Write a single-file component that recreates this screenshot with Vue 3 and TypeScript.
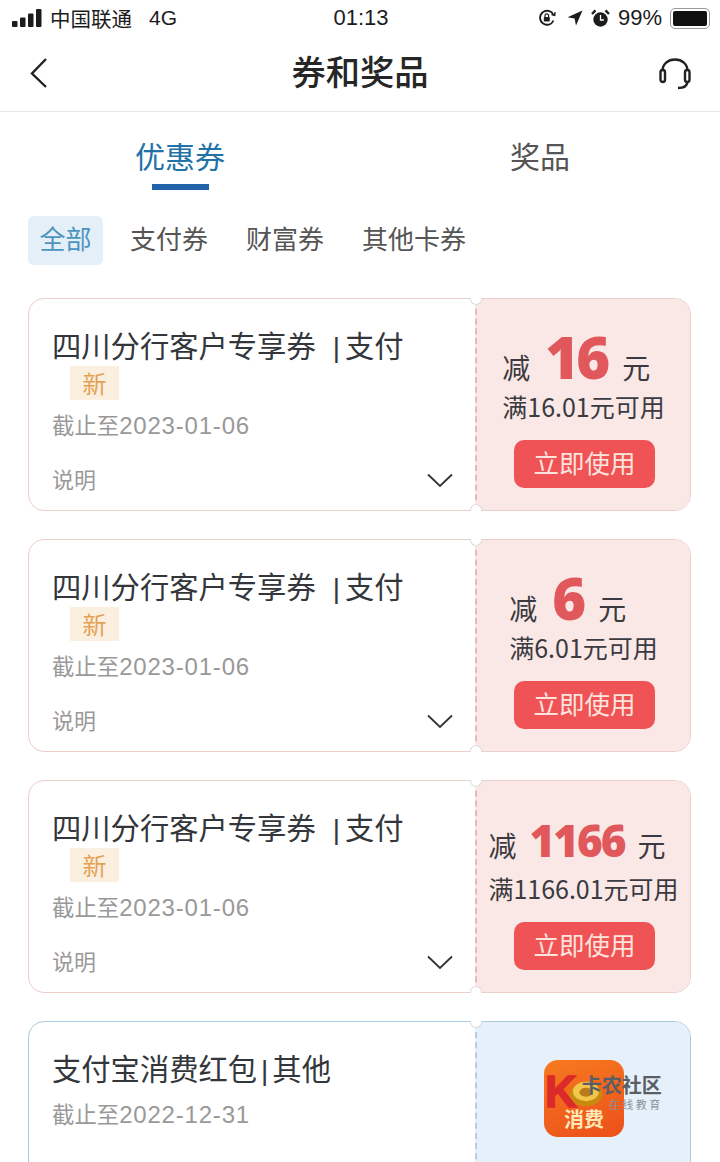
<script setup lang="ts">
interface Coupon {
  amount: string
  min: string
}

const filters = ['全部', '支付券', '财富券', '其他卡券']

const coupons: Coupon[] = [
  { amount: '16', min: '满16.01元可用' },
  { amount: '6', min: '满6.01元可用' },
  { amount: '1166', min: '满1166.01元可用' },
]
</script>

<template>
  <div class="page">
    <header class="status">
      <div class="status-left">
        <svg class="signal" width="31" height="18" viewBox="0 0 31 18">
          <rect x="0" y="12" width="5.5" height="6" rx="1" />
          <rect x="8" y="8.5" width="5.5" height="9.5" rx="1" />
          <rect x="16" y="4.5" width="5.5" height="13.5" rx="1" />
          <rect x="24" y="0" width="5.5" height="18" rx="1" />
        </svg>
        <span class="carrier">中国联通</span>
        <span class="net">4G</span>
      </div>
      <span class="clock">01:13</span>
      <div class="status-right">
        <svg width="18" height="18" viewBox="0 0 18 18" fill="none" stroke="#1c1c1c" stroke-width="1.8">
          <path d="M15.5 11.5A7 7 0 1 1 15.5 6" />
          <path d="M13.5 5.5l3.2.8.4-3.2" stroke-width="1.4" />
          <rect x="5.8" y="8" width="6" height="4.6" rx=".8" fill="#1c1c1c" stroke="none" />
          <path d="M7 8V6.6a1.8 1.8 0 0 1 3.6 0V8" stroke-width="1.2" />
        </svg>
        <svg class="arrow" width="16" height="16" viewBox="0 0 16 16">
          <path d="M15.5.5L9 15.5 7.6 8.6 .6 7.2z" fill="#1c1c1c" />
        </svg>
        <svg width="19" height="19" viewBox="0 0 19 19">
          <circle cx="9.5" cy="10.5" r="7.2" fill="#1c1c1c" />
          <path d="M9.5 6v5h3.4" fill="none" stroke="#fff" stroke-width="1.3" />
          <path d="M1 5l3.5-3.6M18 5l-3.5-3.6" stroke="#1c1c1c" stroke-width="2.4" />
        </svg>
        <span class="pct">99%</span>
        <div class="battery"><div class="battery-fill" /></div>
      </div>
    </header>

    <nav class="navbar">
      <svg class="back" width="20" height="32" viewBox="0 0 20 32" fill="none" stroke="#222" stroke-width="2.4">
        <path d="M17 2L3 16.5 17 30" />
      </svg>
      <h1 class="nav-title">券和奖品</h1>
      <svg class="support" width="34" height="32" viewBox="0 0 34 32" fill="none" stroke="#222" stroke-width="2.4">
        <path d="M4.500 13C4.500 6 10 1.500 17 1.500S29.500 6 29.500 13" />
        <rect x="2.500" y="12" width="4.500" height="12" rx="2.250" />
        <rect x="27" y="12" width="4.500" height="12" rx="2.250" />
        <path d="M29.500 24c-.5 4-4 6-9.500 6" />
      </svg>
    </nav>

    <section class="tabs">
      <div class="tab active">
        <span>优惠券</span>
        <i class="tab-line" />
      </div>
      <div class="tab"><span>奖品</span></div>
    </section>

    <section class="filters">
      <span v-for="(f, i) in filters" :key="f" class="filter" :class="{ on: i === 0 }">{{ f }}</span>
    </section>

    <main class="list">
      <article v-for="c in coupons" :key="c.amount" class="ticket red">
        <div class="ticket-left">
          <div class="title">四川分行客户专享券<span class="sep">|</span>支付</div>
          <span class="badge">新</span>
          <div class="date">截止至<span class="num">2023-01-06</span></div>
          <div class="desc">
            <span>说明</span>
            <svg width="26" height="15" viewBox="0 0 26 15" fill="none" stroke="#333" stroke-width="1.8">
              <path d="M1 1.500L13 13 25 1.500" />
            </svg>
          </div>
        </div>
        <div class="ticket-right">
          <div class="offer">
            <div class="amount-row" :class="{ long: c.amount.length > 2 }">
              <span class="unit">减</span>
              <strong class="amount">{{ c.amount }}</strong>
              <span class="unit">元</span>
            </div>
            <div class="min">{{ c.min }}</div>
          </div>
          <button class="use">立即使用</button>
        </div>
        <i class="notch top" />
        <i class="notch bottom" />
      </article>

      <article class="ticket blue">
        <div class="ticket-left">
          <div class="title">支付宝消费红包<span class="sep small">|</span>其他</div>
          <div class="date second">截止至<span class="num">2022-12-31</span></div>
        </div>
        <div class="ticket-right center">
          <div class="app-icon">
            <svg width="36" height="30" viewBox="0 0 44 36">
              <ellipse cx="22" cy="20" rx="20" ry="14" fill="#c98a10" />
              <ellipse cx="22" cy="16" rx="16" ry="12" fill="#f2c64a" />
              <ellipse cx="22" cy="17" rx="8" ry="5.500" fill="#b97b16" />
            </svg>
            <span>消费</span>
          </div>
        </div>
        <i class="notch top" />
        <div class="mark">
          <span class="mark-k">K</span>
          <div class="mark-text">
            <span class="mark-name">卡农社区</span>
            <span class="mark-sub">在线教育</span>
          </div>
        </div>
      </article>
    </main>
  </div>
</template>

<style>
html, body { margin: 0; background: #fff; overflow: hidden; }
</style>

<style scoped>
.page {
  width: 720px;
  height: 1162px;
  overflow: hidden;
  background: #fff;
  font-family: "Noto Sans CJK SC", "Liberation Sans", sans-serif;
  color: #333;
}

.status {
  height: 36px;
  padding: 0 10px 0 12px;
  display: grid;
  grid-template-columns: 1fr auto 1fr;
  align-items: center;
  color: #1c1c1c;
}
.status-left { display: flex; align-items: center; }
.signal { fill: #1c1c1c; margin-right: 7px; }
.carrier { font-size: 20.5px; }
.net { font-family: "Liberation Sans", sans-serif; font-size: 21px; margin-left: 17px; }
.clock { font-family: "Liberation Sans", sans-serif; font-size: 22px; }
.status-right { display: flex; align-items: center; justify-content: flex-end; gap: 8px; }
.arrow { margin-left: 3px; }
.pct { font-family: "Liberation Sans", sans-serif; font-size: 22px; }
.battery {
  width: 34px;
  height: 15px;
  padding: 2px;
  border: 1.5px solid #999;
  border-radius: 5px;
  box-sizing: content-box;
}
.battery-fill { width: 100%; height: 100%; background: #111; border-radius: 2px; }

.navbar {
  height: 75px;
  padding: 0 29px;
  display: grid;
  grid-template-columns: 1fr auto 1fr;
  align-items: center;
  border-bottom: 1px solid #e6e6e6;
}
.nav-title { margin: -6px 0 0; font-size: 34.3px; font-weight: 500; color: #262626; line-height: 1; }
.back { margin-top: -2px; }
.support { justify-self: end; margin-right: -1px; }

.tabs { display: grid; grid-template-columns: 1fr 1fr; height: 79px; }
.tab {
  position: relative;
  display: flex;
  justify-content: center;
  padding-top: 22px;
  font-size: 30px;
  line-height: 42px;
  color: #555;
}
.tab.active { color: #2272a8; }
.tab-line {
  position: absolute;
  left: 152px;
  top: 72px;
  width: 57px;
  height: 6px;
  background: #2163ab;
}

.filters {
  display: flex;
  align-items: center;
  padding: 25px 0 0 28px;
  font-size: 26px;
  color: #555;
}
.filter { height: 49px; line-height: 43px; margin-right: 38px; }
.filter.on {
  width: 75px;
  margin-right: 27px;
  text-align: center;
  border-radius: 6px;
  background: #e4eff8;
  color: #4b94bf;
}

.list { padding: 33px 29px 0 28px; display: flex; flex-direction: column; gap: 28px; }

.ticket {
  position: relative;
  display: flex;
  height: 213px;
  flex: none;
  border: 1px solid #eccfca;
  border-radius: 16px;
  box-sizing: border-box;
  --line: #e6b9b8;
}
.ticket.blue { height: 240px; border-color: #a9cbe0; --line: #bcccd8; }
.ticket-left {
  flex: 1;
  min-width: 0;
  padding: 26px 23px 0 23px;
}
.title { font-size: 29.3px; line-height: 38px; color: #33363b; white-space: nowrap; }
.sep { font-family: "Liberation Sans", sans-serif; font-size: 28px; margin: 0 5px 0 17px; }
.sep.small { margin: 0 4px 0 4px; }
.badge {
  display: block;
  width: 49px;
  height: 34px;
  margin: -1px 0 0 18px;
  background: #fbefe0;
  color: #e5a153;
  font-size: 24px;
  line-height: 33px;
  text-align: center;
}
.date {
  margin-top: 8px;
  font-size: 22.4px;
  line-height: 32px;
  color: #999;
  white-space: nowrap;
}
.num { font-family: "Liberation Sans", sans-serif; font-size: 24px; letter-spacing: .8px; }
.date.second { margin-top: 7px; }
.desc {
  margin-top: 20px;
  display: flex;
  justify-content: space-between;
  align-items: center;
  font-size: 22px;
  line-height: 32px;
  color: #999;
}
.desc svg { margin-top: 4px; }

.ticket-right {
  width: 215px;
  flex: none;
  border-left: 2px dashed var(--line);
  margin-left: -1px;
  box-sizing: border-box;
  background: #fae8e6;
  border-radius: 0 15px 15px 0;
  display: flex;
  flex-direction: column;
  align-items: center;
  padding-top: 21px;
}
.blue .ticket-right { background: #e6f0fa; }
.ticket-right.center { padding-top: 38px; padding-left: 67px; align-items: flex-start; }
.offer { display: flex; flex-direction: column; align-items: flex-start; }
.amount-row {
  display: flex;
  align-items: baseline;
  gap: 15px;
  height: 71px;
  white-space: nowrap;
}
.amount-row.long { gap: 13px; margin-top: 1px; height: 70px; }
.unit { font-size: 28px; line-height: 74px; color: #3a3a40; }
.amount {
  font-family: "Open Sans", "Liberation Sans", sans-serif;
  font-size: 58px;
  font-weight: 800;
  line-height: 74px;
  letter-spacing: -3px;
  color: #e0585c;
}
.long .amount { font-size: 44px; letter-spacing: -2px; }
.min { font-size: 25px; line-height: 30px; color: #3a3a40; white-space: nowrap; }
.use {
  margin: 19px 0 0 2px;
  width: 141px;
  height: 48px;
  border: 0;
  border-radius: 10px;
  background: #f05355;
  color: #fde4dd;
  font-family: inherit;
  font-size: 25.500px;
  line-height: 44px;
  padding: 0 0 4px;
}

.notch {
  position: absolute;
  left: 441px;
  width: 12px;
  height: 7px;
  background: #fff;
  border: 1px solid var(--line);
  box-sizing: border-box;
}
.notch.top { top: -1px; border-top: 0; border-radius: 0 0 8px 8px; border-color: #ddd; }
.notch.bottom { bottom: -1px; border-bottom: 0; border-radius: 8px 8px 0 0; border-color: #ddd; }

.app-icon {
  width: 80px;
  height: 77px;
  border-radius: 14px;
  background: linear-gradient(160deg, #f77a1f, #ec4f1a);
  display: flex;
  flex-direction: column;
  align-items: center;
  padding-top: 18px;
  box-sizing: border-box;
  color: #ffe9b8;
  font-size: 20px;
  font-weight: 700;
  line-height: 22px;
}
.app-icon svg { margin-left: 4px; }

.mark {
  position: absolute;
  left: 516px;
  top: 50px;
  display: flex;
  align-items: center;
  pointer-events: none;
}
.mark-k {
  font-family: "Liberation Sans", sans-serif;
  font-size: 44px;
  font-weight: 700;
  line-height: 40px;
  color: #dc2a2a;
  -webkit-text-stroke: 1.5px #dc2a2a;
}
.mark-text { display: flex; flex-direction: column; margin-left: 5px; color: #5a5f66; }
.mark-name { font-size: 20px; font-weight: 700; line-height: 22px; white-space: nowrap; }
.mark-sub { font-size: 11px; letter-spacing: 2.500px; line-height: 14px; margin: 1px 0 0 27px; color: #8b9097; white-space: nowrap; }
</style>
